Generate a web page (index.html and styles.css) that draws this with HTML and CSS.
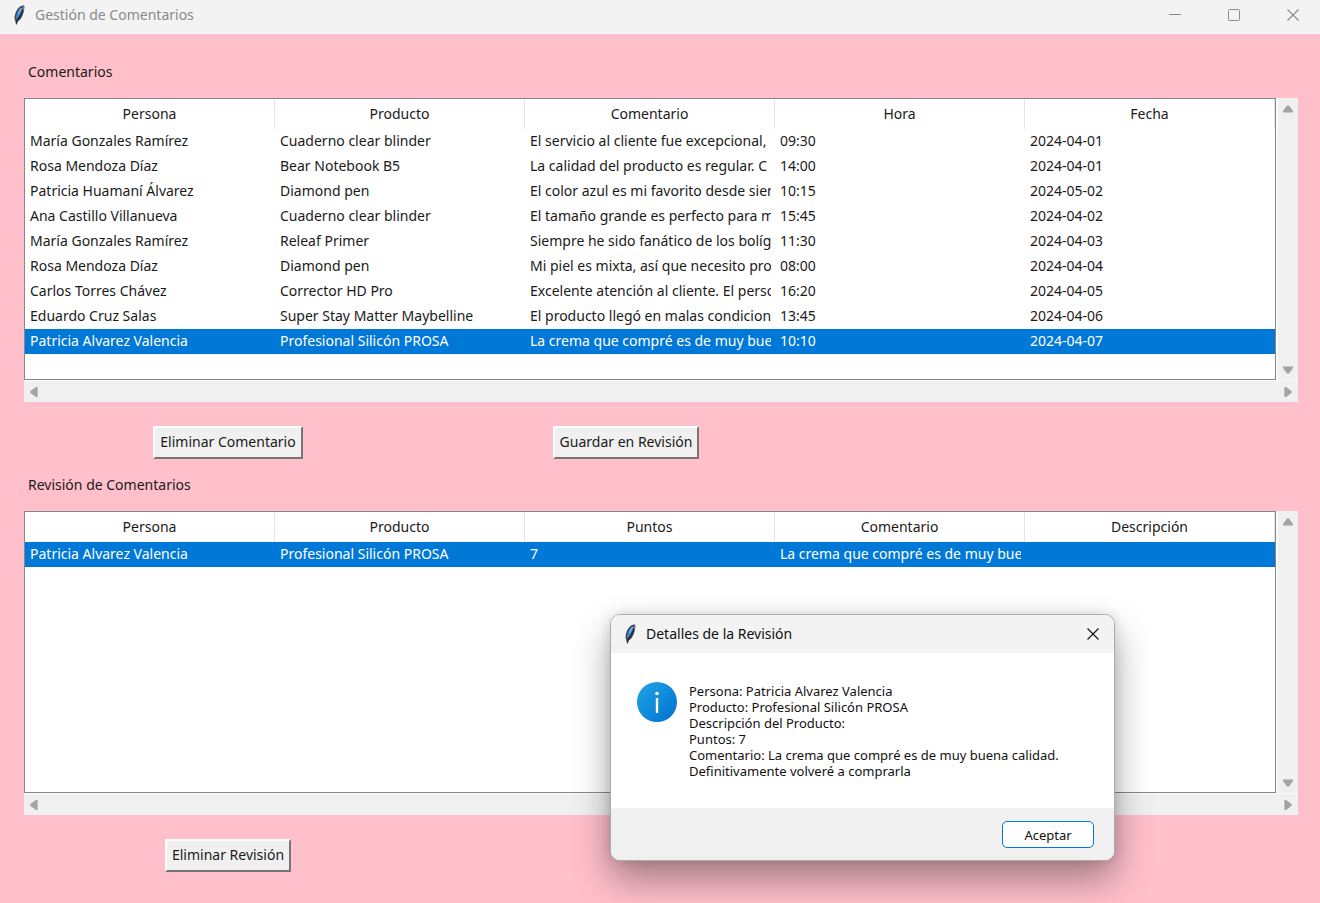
FILE: index.html
```html
<!DOCTYPE html>
<html lang="es">
<head>
<meta charset="utf-8">
<title>Gestión de Comentarios</title>
<link rel="stylesheet" href="styles.css">
</head>
<body>
<svg width="0" height="0" class="defs" aria-hidden="true">
  <symbol id="feather" viewBox="0 0 12 20">
    <path d="M11.200.8C10.200.2 7.600 1 5.600 3 3.400 5.200 2 8.500 1.600 12c-.1 1.500.1 2.800.7 4l.7 3.500h1l.5-3c2-.9 4-3.200 5.200-6.500C10.900 7 11.800 2.500 11.200.8z" fill="#3a3f46"/>
    <path d="M9.600 2C7.600 2.400 5.400 4.600 4.200 7.400 3.200 9.800 2.800 12 3.200 14.200c1.600-1.200 3.600-3 4.800-5.800C9 6.200 10.200 3.600 9.600 2z" fill="#3c82d2"/>
    <path d="M8.800 3.200C7.200 5 6.200 7 5.600 9" stroke="#82b4ea" stroke-width="1.200" fill="none"/>
    <path d="M10.400 3C8.800 8 6 12 3.500 18" stroke="#15181c" stroke-width=".9" fill="none"/>
    <path d="M10.800 1.400l-.4 4M1.800 12.500v2" stroke="#9a9a96" stroke-width=".9" fill="none"/>
  </symbol>
  <symbol id="close" viewBox="0 0 12 12">
    <path d="M.5.5l11 11M11.500.5l-11 11" stroke="currentColor" stroke-width="1.100" fill="none"/>
  </symbol>
  <symbol id="arrow" viewBox="0 0 10 8">
    <path d="M4 .4h2L10 6v1.600H0V6z" fill="#a3a3a3"/>
  </symbol>
</svg>

<header class="titlebar">
  <svg class="feather"><use href="#feather"/></svg>
  <h1 class="title">Gestión de Comentarios</h1>
  <div class="controls">
    <button class="control" aria-label="Minimizar"><svg class="glyph" viewBox="0 0 12 12"><path d="M0 5.500h12" stroke="currentColor"/></svg></button>
    <button class="control" aria-label="Maximizar"><svg class="glyph" viewBox="0 0 12 12"><rect x=".5" y=".5" width="11" height="11" rx="1.200" fill="none" stroke="currentColor"/></svg></button>
    <button class="control" aria-label="Cerrar"><svg class="glyph"><use href="#close"/></svg></button>
  </div>
</header>

<main class="content">
  <h2 class="label">Comentarios</h2>
  <div class="frame">
    <div class="tree">
      <table class="table">
        <thead><tr><th>Persona</th><th>Producto</th><th>Comentario</th><th>Hora</th><th>Fecha</th></tr></thead>
        <tbody>
          <tr><td>María Gonzales Ramírez</td><td>Cuaderno clear blinder</td><td><div class="clip">El servicio al cliente fue excepcional,</div></td><td>09:30</td><td>2024-04-01</td></tr>
          <tr><td>Rosa Mendoza Díaz</td><td>Bear Notebook B5</td><td><div class="clip">La calidad del producto es regular. C</div></td><td>14:00</td><td>2024-04-01</td></tr>
          <tr><td>Patricia Huamaní Álvarez</td><td>Diamond pen</td><td><div class="clip">El color azul es mi favorito desde siem</div></td><td>10:15</td><td>2024-05-02</td></tr>
          <tr><td>Ana Castillo Villanueva</td><td>Cuaderno clear blinder</td><td><div class="clip">El tamaño grande es perfecto para m</div></td><td>15:45</td><td>2024-04-02</td></tr>
          <tr><td>María Gonzales Ramírez</td><td>Releaf Primer</td><td><div class="clip">Siempre he sido fanático de los bolíg</div></td><td>11:30</td><td>2024-04-03</td></tr>
          <tr><td>Rosa Mendoza Díaz</td><td>Diamond pen</td><td><div class="clip">Mi piel es mixta, así que necesito pro</div></td><td>08:00</td><td>2024-04-04</td></tr>
          <tr><td>Carlos Torres Chávez</td><td>Corrector HD Pro</td><td><div class="clip">Excelente atención al cliente. El perso</div></td><td>16:20</td><td>2024-04-05</td></tr>
          <tr><td>Eduardo Cruz Salas</td><td>Super Stay Matter Maybelline</td><td><div class="clip">El producto llegó en malas condicion</div></td><td>13:45</td><td>2024-04-06</td></tr>
          <tr class="selected"><td>Patricia Alvarez Valencia</td><td>Profesional Silicón PROSA</td><td><div class="clip">La crema que compré es de muy bue</div></td><td>10:10</td><td>2024-04-07</td></tr>
        </tbody>
      </table>
    </div>
    <div class="scroll vertical">
      <button class="step" aria-label="Subir"><svg class="arrow"><use href="#arrow"/></svg></button>
      <button class="step" aria-label="Bajar"><svg class="arrow down"><use href="#arrow"/></svg></button>
    </div>
    <div class="scroll horizontal">
      <button class="step" aria-label="Izquierda"><svg class="arrow left"><use href="#arrow"/></svg></button>
      <button class="step" aria-label="Derecha"><svg class="arrow right"><use href="#arrow"/></svg></button>
    </div>
  </div>
  <div class="actions">
    <button class="button">Eliminar Comentario</button>
    <button class="button">Guardar en Revisión</button>
  </div>

  <h2 class="label">Revisión de Comentarios</h2>
  <div class="frame">
    <div class="tree">
      <table class="table">
        <thead><tr><th>Persona</th><th>Producto</th><th>Puntos</th><th>Comentario</th><th>Descripción</th></tr></thead>
        <tbody>
          <tr class="selected"><td>Patricia Alvarez Valencia</td><td>Profesional Silicón PROSA</td><td>7</td><td><div class="clip">La crema que compré es de muy bue</div></td><td></td></tr>
        </tbody>
      </table>
    </div>
    <div class="scroll vertical">
      <button class="step" aria-label="Subir"><svg class="arrow"><use href="#arrow"/></svg></button>
      <button class="step" aria-label="Bajar"><svg class="arrow down"><use href="#arrow"/></svg></button>
    </div>
    <div class="scroll horizontal">
      <button class="step" aria-label="Izquierda"><svg class="arrow left"><use href="#arrow"/></svg></button>
      <button class="step" aria-label="Derecha"><svg class="arrow right"><use href="#arrow"/></svg></button>
    </div>
  </div>
  <div class="actions">
    <button class="button">Eliminar Revisión</button>
  </div>
</main>

<section class="dialog" role="dialog" aria-labelledby="dialog-title">
  <header class="dialog-bar">
    <svg class="feather"><use href="#feather"/></svg>
    <h2 class="title" id="dialog-title">Detalles de la Revisión</h2>
    <button class="control" aria-label="Cerrar"><svg class="glyph"><use href="#close"/></svg></button>
  </header>
  <div class="dialog-body">
    <svg class="info" viewBox="0 0 40 40" aria-hidden="true">
      <defs><linearGradient id="blue" x1="0" y1="0" x2="1" y2="1"><stop offset="0" stop-color="#21a5e6"/><stop offset="1" stop-color="#0070d0"/></linearGradient></defs>
      <circle cx="20" cy="20" r="20" fill="url(#blue)"/>
      <circle cx="20" cy="11.500" r="1.800" fill="#fff"/>
      <path d="M20 16v15" stroke="#fff" stroke-width="2.400"/>
    </svg>
    <p class="message">Persona: Patricia Alvarez Valencia<br>Producto: Profesional Silicón PROSA<br>Descripción del Producto:<br>Puntos: 7<br>Comentario: La crema que compré es de muy buena calidad.<br>Definitivamente volveré a comprarla</p>
  </div>
  <footer class="dialog-footer"><button class="accept">Aceptar</button></footer>
</section>
</body>
</html>
```

FILE: styles.css
```css
* { box-sizing: border-box; }

body {
  margin: 0;
  min-height: 100vh;
  background: #ffbfcb;
  color: #1a1a1a;
  font: 14px/20px "Noto Sans", "Open Sans", sans-serif;
}

button {
  margin: 0;
  padding: 0;
  border: 0;
  background: none;
  color: inherit;
  font: inherit;
}

.defs { position: absolute; }

.titlebar,
.dialog-bar {
  display: flex;
  align-items: center;
  background: #f3f3f3;
}

.titlebar {
  height: 34px;
  padding: 0 0 4px 13px;
  color: #8a8a8a;
}

.feather { width: 12px; height: 20px; }

.title {
  flex: 1;
  margin: 0 0 0 10px;
  font-size: 14px;
  font-weight: 400;
}

.controls { display: flex; gap: 4px; }

.control {
  display: flex;
  align-items: center;
  justify-content: center;
  width: 55px;
  height: 30px;
}

.glyph { width: 12px; height: 12px; }

.content { padding: 24px 22px 24px 24px; }

.label {
  margin: 0 4px 12px;
  font-size: 14px;
  font-weight: 400;
  line-height: 28px;
}

.frame {
  display: grid;
  grid-template-columns: 1fr 20px;
  column-gap: 2px;
  row-gap: 1px;
  background: #fafafa;
}

.tree {
  min-height: 282px;
  border: 1px solid #828790;
  background: #fff;
}

.table {
  width: 100%;
  table-layout: fixed;
  border-collapse: separate;
  border-spacing: 0;
}

th {
  height: 30px;
  padding: 0;
  border-right: 1px solid #e5e5e5;
  font-weight: 400;
}

td {
  height: 25px;
  padding: 0 4px 2px 5px;
  white-space: nowrap;
}

.clip { overflow: hidden; }

.selected {
  background: #0078d7;
  color: #fff;
}

.scroll {
  display: flex;
  justify-content: space-between;
  background: #f0f0f0;
}

.vertical { flex-direction: column; }

.horizontal { grid-column: 1 / -1; }

.step {
  display: flex;
  align-items: center;
  justify-content: center;
  width: 20px;
  height: 21px;
}

.arrow { width: 10px; height: 8px; }
.down { transform: rotate(180deg); }
.left { transform: rotate(-90deg); }
.right { transform: rotate(90deg); }

.actions {
  display: grid;
  grid-template-columns: 408fr 388fr 478fr;
  justify-items: center;
  margin: 24px 0 12px;
}

.button {
  height: 33px;
  padding: 0 5px 1px;
  border: 2px solid;
  border-color: #fff #767676 #767676 #fff;
  background: #f0f0f0;
}

.dialog {
  position: absolute;
  top: 614px;
  left: 610px;
  width: 505px;
  overflow: hidden;
  border: 1px solid #acacac;
  border-radius: 10px;
  background: #fff;
  box-shadow: 0 18px 36px rgba(0, 0, 0, 0.36), 0 0 12px rgba(0, 0, 0, 0.12);
  color: #111;
}

.dialog-bar {
  height: 38px;
  padding-left: 13px;
}

.dialog-bar .control { width: 42px; }

.dialog-body {
  display: flex;
  gap: 12px;
  padding: 29px 26px 26px;
}

.info { flex: none; width: 40px; height: 40px; }

.message {
  margin: 0;
  padding: 1px 0 3px;
  font-size: 13px;
  line-height: 16px;
}

.dialog-footer {
  display: flex;
  justify-content: flex-end;
  padding: 13px 20px 12px;
  background: #f0f0f0;
}

.accept {
  width: 92px;
  height: 27px;
  border: 1px solid #0078d7;
  border-radius: 5px;
  background: #fdfdfd;
  font-size: 13px;
}
```
